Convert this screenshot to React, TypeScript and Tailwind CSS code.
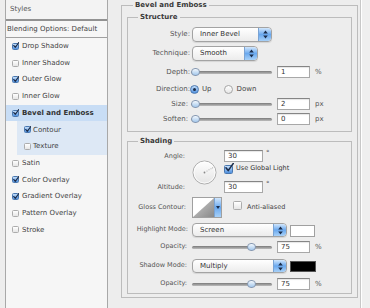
import React from 'react';

function Check({ on, big }: { on: boolean; big?: boolean }) {
  return (
    <span
      className={`relative shrink-0 inline-block ${big ? 'w-[9px] h-[9px]' : 'w-[7px] h-[7px]'} rounded-[1.5px] border ${
        on
          ? 'border-[#4a78b0] bg-linear-to-b from-[#c4def9] to-[#4f90de]'
          : 'border-[#acacac] bg-linear-to-b from-white to-[#e6e6e6]'
      }`}
    >
      {on && (
        <svg className="absolute left-[0px] top-[-30%] w-[125%] h-[125%]" viewBox="0 0 9 9">
          <path d="M1 5 L3.3 7.8 L8.6 0.4" stroke="#1c2c48" strokeWidth="1.6" fill="none" strokeLinecap="round" strokeLinejoin="round" />
        </svg>
      )}
    </span>
  );
}

function Stepper() {
  return (
    <span className="w-[13px] h-full shrink-0 rounded-r-[3px] border-l border-[#7aa3d3] bg-linear-to-b from-[#d2e7fc] via-[#69a8ee] to-[#a8d1f8] flex items-center justify-center">
      <svg width="5" height="9" viewBox="0 0 5 9">
        <path d="M2.5 0.5 L4.8 3.6 L0.2 3.6Z M2.5 8.5 L4.8 5.4 L0.2 5.4Z" fill="#1a2c4a" />
      </svg>
    </span>
  );
}

function Select({ w, h, text }: { w: string; h: string; text: string }) {
  return (
    <div className={`${w} ${h} shrink-0 flex items-stretch rounded-[4px] border border-[#a3a3a3] bg-linear-to-b from-white to-[#ececec] shadow-[0_1px_1px_rgba(0,0,0,0.1)] overflow-hidden`}>
      <span className="flex-1 flex items-center pl-[7px] text-[#333]">{text}</span>
      <Stepper />
    </div>
  );
}

function Slider({ pos, w }: { pos: number; w: string }) {
  return (
    <div className={`relative ${w} h-[10px] shrink-0 flex items-center`}>
      <div className="w-full h-[3px] rounded-full bg-linear-to-b from-[#7a7a7a] to-[#bdbdbd]" />
      <div
        className="absolute top-[1px] w-[9px] h-[8px] rounded-full border border-[#8799b2] bg-linear-to-b from-[#f3f8fd] to-[#a4c8ec]"
        style={{ left: pos }}
      />
    </div>
  );
}

function Input({ v, w }: { v: string; w: string }) {
  return (
    <div className={`${w} h-[12px] shrink-0 border border-[#a8a8a8] border-t-[#858585] bg-white pl-[3px] leading-[10px] text-[#333] shadow-[inset_0_1px_1px_rgba(0,0,0,0.1)]`}>
      {v}
    </div>
  );
}

function Radio({ on }: { on: boolean }) {
  return (
    <span
      className={`w-[9px] h-[9px] shrink-0 rounded-full border flex items-center justify-center ${
        on ? 'border-[#4a78b0] bg-linear-to-b from-[#c4def9] to-[#4f90de]' : 'border-[#a5a5a5] bg-linear-to-b from-white to-[#e6e6e6]'
      }`}
    >
      {on && <span className="w-[3px] h-[3px] rounded-full bg-[#1c2c48]" />}
    </span>
  );
}

const items = [
  { label: 'Drop Shadow', c: true },
  { label: 'Inner Shadow', c: false },
  { label: 'Outer Glow', c: true },
  { label: 'Inner Glow', c: false },
  { label: 'Bevel and Emboss', c: true, sel: true },
  { label: 'Contour', c: true, sub: true },
  { label: 'Texture', c: false, sub: true },
  { label: 'Satin', c: false },
  { label: 'Color Overlay', c: true },
  { label: 'Gradient Overlay', c: true },
  { label: 'Pattern Overlay', c: false },
  { label: 'Stroke', c: false },
];

export default function App() {
  return (
    <div className="w-[370px] h-[308px] bg-[#ededed] flex items-start overflow-hidden font-['DejaVu_Sans',sans-serif] text-[7px] text-[#4a4a4a]">
      {/* Left styles list */}
      <div className="ml-[5px] w-[103px] h-[308px] shrink-0 border-x border-[#a8a8a8] bg-[#f6f6f6] flex flex-col">
        <div className="h-[21px] shrink-0 flex items-center pl-[4px] border-b-[2px] border-[#929292] bg-[#f3f3f3] text-[#555]">
          Styles
        </div>
        <div className="h-[17px] shrink-0 flex items-center pl-[1px] border-b border-[#a0a0a0] text-[#444]">
          Blending Options: Default
        </div>
        {items.map((it) =>
          it.sub ? (
            <div key={it.label} className="h-[16.7px] shrink-0 flex pl-[11px]">
              <div className="flex-1 flex items-center gap-[2px] pl-[7px] bg-[#dde8f5] text-[#444]">
                <Check on={it.c} />
                <span>{it.label}</span>
              </div>
            </div>
          ) : (
            <div
              key={it.label}
              className={`h-[16.7px] shrink-0 flex items-center gap-[3px] pl-[6px] ${it.sel ? 'bg-[#c8ddf5] font-bold text-[#333]' : 'text-[#444]'}`}
            >
              <Check on={it.c} />
              <span>{it.label}</span>
            </div>
          )
        )}
      </div>

      {/* Right: Bevel and Emboss */}
      <fieldset className="ml-[13px] w-[237px] shrink-0 border border-[#bcbcbc]">
        <legend className="ml-[11px] px-[2px] font-bold leading-[10px] text-[#3a3a3a]">Bevel and Emboss</legend>
        <div className="px-[5px] pb-[3px]">
          {/* Structure */}
          <fieldset className="mt-[2px] border border-[#bcbcbc] pb-[5px]">
            <legend className="ml-[10px] px-[2px] font-bold leading-[10px] text-[#3a3a3a]">Structure</legend>
            <div className="mt-[5px] h-[15px] flex items-center">
              <span className="w-[62px] shrink-0 text-right text-[#555]">Style:</span>
              <span className="ml-[2px]"><Select w="w-[80px]" h="h-[15px]" text="Inner Bevel" /></span>
            </div>
            <div className="mt-[4px] h-[15px] flex items-center">
              <span className="w-[62px] shrink-0 text-right text-[#555]">Technique:</span>
              <span className="ml-[2px]"><Select w="w-[66px]" h="h-[15px]" text="Smooth" /></span>
            </div>
            <div className="mt-[4px] h-[14px] flex items-center">
              <span className="w-[62px] shrink-0 text-right text-[#555]">Depth:</span>
              <span className="ml-[1px]"><Slider w="w-[81px]" pos={0} /></span>
              <span className="ml-[5px]"><Input w="w-[33px]" v="1" /></span>
              <span className="ml-[5px] text-[#555]">%</span>
            </div>
            <div className="mt-[3px] h-[14px] flex items-center">
              <span className="w-[62px] shrink-0 text-right text-[#555]">Direction:</span>
              <Radio on={true} />
              <span className="ml-[3px] text-[#444]">Up</span>
              <span className="ml-[12px]"><Radio on={false} /></span>
              <span className="ml-[4px] text-[#444]">Down</span>
            </div>
            <div className="mt-[1px] h-[14px] flex items-center">
              <span className="w-[60px] shrink-0 text-right text-[#555]">Size:</span>
              <span className="ml-[3px]"><Slider w="w-[81px]" pos={0} /></span>
              <span className="ml-[5px]"><Input w="w-[33px]" v="2" /></span>
              <span className="ml-[5px] text-[#555]">px</span>
            </div>
            <div className="mt-[1px] h-[14px] flex items-center">
              <span className="w-[60px] shrink-0 text-right text-[#555]">Soften:</span>
              <span className="ml-[3px]"><Slider w="w-[81px]" pos={0} /></span>
              <span className="ml-[5px]"><Input w="w-[33px]" v="0" /></span>
              <span className="ml-[5px] text-[#555]">px</span>
            </div>
          </fieldset>

          {/* Shading */}
          <fieldset className="mt-[4px] border border-[#bcbcbc] pb-[3px]">
            <legend className="ml-[10px] px-[2px] font-bold leading-[10px] text-[#3a3a3a]">Shading</legend>
            <div className="mt-[2px] flex items-start">
              <div className="w-[57px] shrink-0 flex flex-col items-end text-[6.5px] text-[#555]">
                <span className="mt-[2px] h-[12px] leading-[12px]">Angle:</span>
                <span className="mt-[19px] h-[12px] leading-[12px]">Altitude:</span>
              </div>
              <svg className="ml-[7px] mt-[12px] shrink-0" width="25" height="25" viewBox="0 0 25 25">
                <defs>
                  <linearGradient id="dial" x1="0" y1="0" x2="0" y2="1">
                    <stop offset="0" stopColor="#ffffff" />
                    <stop offset="1" stopColor="#e4e4e4" />
                  </linearGradient>
                </defs>
                <circle cx="12.5" cy="12.5" r="11.5" fill="url(#dial)" stroke="#ababab" strokeWidth="1" />
                <circle cx="12.5" cy="12.5" r="10.5" fill="none" stroke="#ffffff" strokeWidth="0.8" />
                <circle cx="12.5" cy="12.5" r="0.9" fill="#888" />
                <circle cx="15" cy="11" r="0.5" fill="#999" />
                <circle cx="17" cy="9.8" r="0.5" fill="#999" />
                <circle cx="19" cy="8.7" r="0.5" fill="#999" />
                <circle cx="20.6" cy="7.8" r="0.6" fill="#aaa" />
              </svg>
              <div className="ml-[7px] flex flex-col">
                <div className="mt-[2px] flex items-start">
                  <Input w="w-[39px]" v="30" />
                  <span className="ml-[3px] leading-[7px] text-[#555]">°</span>
                </div>
                <div className="mt-[2px] h-[10px] flex items-center">
                  <Check on={true} big />
                  <span className="ml-[3px] text-[6.5px] text-[#333]">Use Global Light</span>
                </div>
                <div className="mt-[7px] flex items-start">
                  <Input w="w-[39px]" v="30" />
                  <span className="ml-[3px] leading-[7px] text-[#555]">°</span>
                </div>
              </div>
            </div>

            <div className="mt-[4px] h-[21px] flex items-center">
              <span className="w-[58px] shrink-0 text-right text-[6.5px] text-[#555]">Gloss Contour:</span>
              <div className="ml-[6px] w-[30px] h-[21px] shrink-0 flex border border-[#a0a0a0] bg-white">
                <svg className="flex-1 h-full" viewBox="0 0 22 19" preserveAspectRatio="none">
                  <defs>
                    <linearGradient id="cg" x1="0" y1="0" x2="1" y2="1">
                      <stop offset="0" stopColor="#d0d0d0" />
                      <stop offset="1" stopColor="#888888" />
                    </linearGradient>
                  </defs>
                  <rect x="0" y="0" width="22" height="19" fill="#ffffff" />
                  <polygon points="0,19 22,0 22,19" fill="url(#cg)" />
                </svg>
                <span className="w-[7px] shrink-0 border-l border-[#7aa3d3] bg-linear-to-b from-[#d2e7fc] via-[#69a8ee] to-[#a8d1f8] flex items-center justify-center">
                  <svg width="4" height="3" viewBox="0 0 4 3"><path d="M0 0 L4 0 L2 3Z" fill="#1a2c4a" /></svg>
                </span>
              </div>
              <span className="ml-[11px]"><Check on={false} big /></span>
              <span className="ml-[5px] text-[6.5px] text-[#444]">Anti-aliased</span>
            </div>

            <div className="mt-[5px] h-[14px] flex items-center">
              <span className="w-[60px] shrink-0 text-right text-[6.5px] text-[#555]">Highlight Mode:</span>
              <span className="ml-[4px]"><Select w="w-[95px]" h="h-[14px]" text="Screen" /></span>
              <span className="ml-[3px] mt-[1px] w-[25px] h-[12px] shrink-0 border border-[#a0a0a0] bg-white" />
            </div>
            <div className="mt-[4px] h-[12px] flex items-center">
              <span className="w-[59px] shrink-0 text-right text-[6.5px] text-[#555]">Opacity:</span>
              <span className="ml-[5px]"><Slider w="w-[80px]" pos={55} /></span>
              <span className="ml-[5px]"><Input w="w-[33px]" v="75" /></span>
              <span className="ml-[5px] text-[#555]">%</span>
            </div>
            <div className="mt-[6px] h-[14px] flex items-center">
              <span className="w-[59px] shrink-0 text-right text-[6.5px] text-[#555]">Shadow Mode:</span>
              <span className="ml-[5px]"><Select w="w-[95px]" h="h-[14px]" text="Multiply" /></span>
              <span className="ml-[3px] w-[26px] h-[11px] shrink-0 border border-[#555] bg-black" />
            </div>
            <div className="mt-[5px] h-[12px] flex items-center">
              <span className="w-[59px] shrink-0 text-right text-[6.5px] text-[#555]">Opacity:</span>
              <span className="ml-[5px]"><Slider w="w-[80px]" pos={55} /></span>
              <span className="ml-[5px]"><Input w="w-[33px]" v="75" /></span>
              <span className="ml-[5px] text-[#555]">%</span>
            </div>
          </fieldset>
        </div>
      </fieldset>

      <div className="ml-[2px] w-[1px] h-[308px] shrink-0 bg-[#c8c8c8]" />
      <div className="w-[1px] h-[308px] shrink-0 bg-white" />
      <div className="flex-1 h-[308px] bg-[#efefef]" />
    </div>
  );
}
